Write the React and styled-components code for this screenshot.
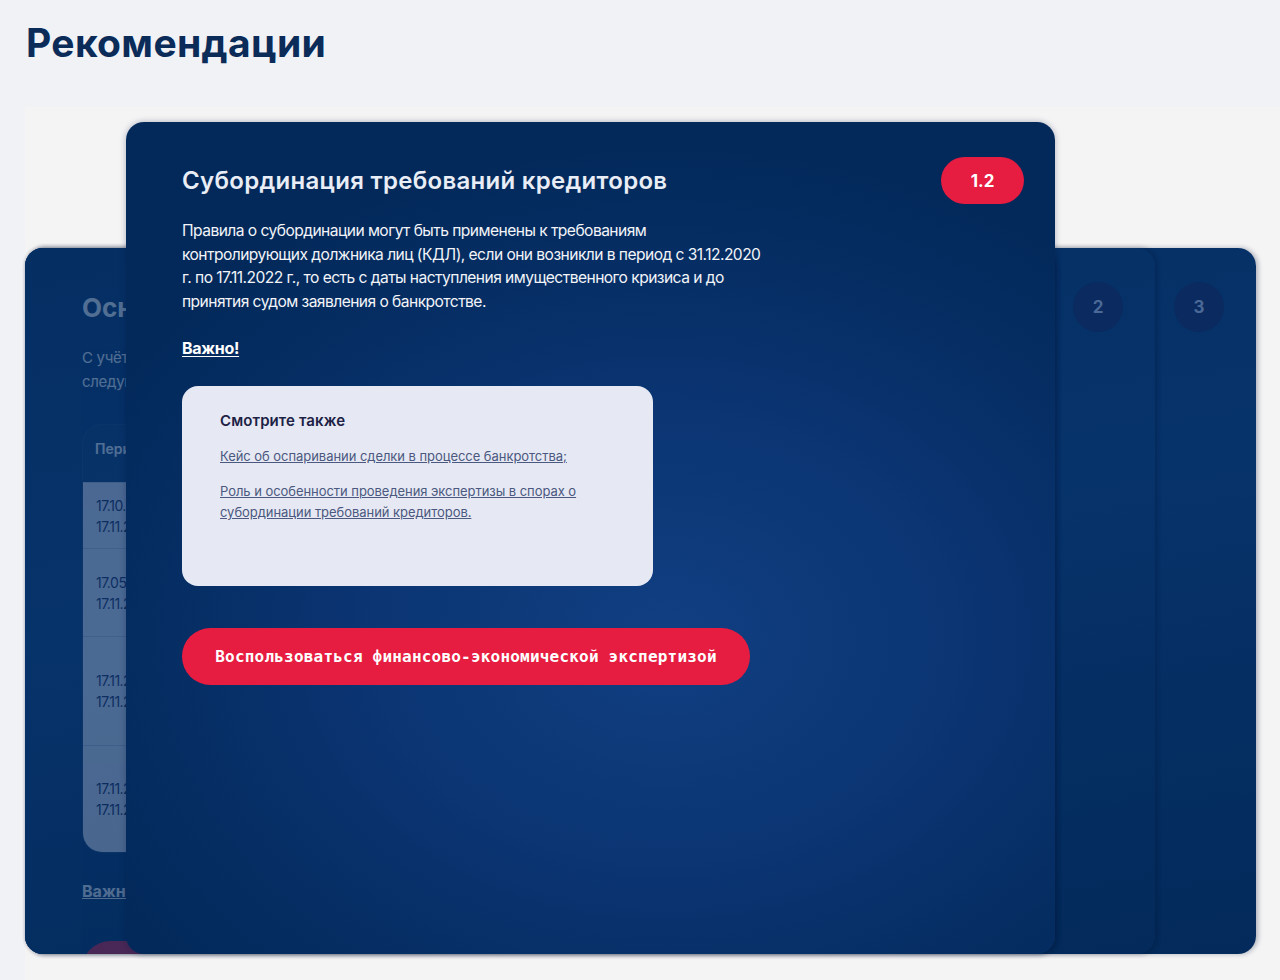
import React from "react";
import styled, { createGlobalStyle } from "styled-components";

const GlobalStyle = createGlobalStyle`
  html, body {
    margin: 0;
    padding: 0;
    background: #f0f2f6;
    font-family: Inter, "Noto Sans", sans-serif;
    -webkit-font-smoothing: antialiased;
  }
  * { box-sizing: border-box; }
`;

const Page = styled.div`
  width: 1280px;
  height: 980px;
  overflow: hidden;
  padding-top: 19px;
`;

const PageTitle = styled.h1`
  margin: 0 0 0 26px;
  font-size: 39px;
  line-height: 48px;
  font-weight: 700;
  color: #0b2c59;
  letter-spacing: 0.35px;
`;

const Section = styled.section`
  margin: 40px 0 0 25px;
  padding: 15px 24px 26px 0;
  background: #f4f4f5;
`;

const Stack = styled.div`
  display: grid;
  grid-template-columns: 1fr;
`;

const BackCard = styled.div`
  grid-area: 1 / 1;
  position: relative;
  z-index: ${(p) => p.$z};
  margin-top: 126px;
  width: ${(p) => p.$width}px;
  height: 706px;
  border-radius: 18px;
  overflow: hidden;
  background: linear-gradient(170deg, #052f63 0%, #07336b 45%, #032a5a 100%);
  box-shadow: 2px 0 5px rgba(0, 16, 48, 0.3);
  display: flex;
  flex-direction: column;
`;

const BackHeader = styled.div`
  display: flex;
  align-items: center;
  justify-content: space-between;
  padding: 34px 32px 0 57px;
  height: 84px;
`;

const NumberCircle = styled.div`
  width: 50px;
  height: 50px;
  border-radius: 50%;
  background: #0a2a60;
  color: #4a6997;
  font-size: 17px;
  font-weight: 700;
  display: flex;
  align-items: center;
  justify-content: center;
`;

const Faded = styled.div`
  opacity: 0.3;
  color: #ffffff;
`;

const BackTitle = styled.h2`
  margin: 0;
  font-size: 26px;
  font-weight: 700;
  color: #fff;
  white-space: nowrap;
`;

const BackBody = styled(Faded)`
  padding: 14px 0 0 57px;
`;

const BackText = styled.p`
  margin: 0;
  font-size: 15px;
  line-height: 24px;
  letter-spacing: -0.3px;
  width: 820px;
`;

const Table = styled.div`
  margin-top: 30px;
  width: 880px;
  border-radius: 20px;
  overflow: hidden;
  border: 1px solid rgba(255, 255, 255, 0.08);
`;

const TableHead = styled.div`
  height: 57px;
  display: flex;
  align-items: center;
  padding: 0 0 10px 12px;
  font-size: 14px;
  font-weight: 600;
  background: rgba(255, 255, 255, 0.03);
`;

const TableRow = styled.div`
  height: ${(p) => p.$h}px;
  display: flex;
  align-items: center;
  padding-left: 13px;
  background: #e6e9f3;
  color: #1c2550;
  font-size: 14px;
  line-height: 21px;
  letter-spacing: -0.5px;
  border-top: 1px solid #c3c9da;
  &:first-of-type { border-top: none; }
`;

const BackLink = styled.a`
  display: inline-block;
  margin-top: 28px;
  font-size: 16px;
  font-weight: 700;
  color: #fff;
  text-decoration: underline;
`;

const BackButton = styled.div`
  margin-top: 40px;
  width: 560px;
  height: 57px;
  border-radius: 29px;
  background: #e61c40;
`;

const FrontCard = styled.article`
  grid-area: 1 / 1;
  position: relative;
  z-index: 10;
  margin-left: 101px;
  width: 929px;
  height: 832px;
  border-radius: 18px;
  padding: 35px 31px 0 56px;
  background:
    radial-gradient(ellipse 70% 60% at 58% 62%, #113f82 0%, #0b3573 45%, #052d62 80%, #03295a 100%);
  box-shadow: 0 0 6px rgba(0, 20, 60, 0.3);
  color: #fff;
`;

const FrontHeader = styled.div`
  display: flex;
  align-items: center;
  justify-content: space-between;
  height: 47px;
`;

const FrontTitle = styled.h2`
  margin: 0;
  font-size: 24px;
  font-weight: 600;
  color: #e9edf5;
  letter-spacing: 0.3px;
`;

const Badge = styled.div`
  width: 83px;
  height: 47px;
  border-radius: 24px;
  background: #e61c40;
  color: #fff;
  font-size: 17px;
  font-weight: 700;
  display: flex;
  align-items: center;
  justify-content: center;
`;

const Paragraph = styled.p`
  margin: 15px 0 0;
  max-width: 582px;
  font-size: 15.6px;
  line-height: 23.7px;
  letter-spacing: -0.55px;
  color: #f2f4f8;
`;

const Important = styled.a`
  display: inline-block;
  margin-top: 22px;
  font-size: 16px;
  line-height: 24px;
  font-weight: 700;
  color: #fff;
  text-decoration: underline;
  text-underline-offset: 2px;
  letter-spacing: -0.3px;
`;

const SeeAlso = styled.div`
  margin-top: 26px;
  width: 471px;
  height: 200px;
  border-radius: 16px;
  background: #e6e9f3;
  padding: 25px 30px 0 38px;
`;

const SeeAlsoTitle = styled.h3`
  margin: 0;
  font-size: 15px;
  line-height: 20px;
  font-weight: 600;
  color: #1c2145;
  letter-spacing: 0.1px;
`;

const SeeAlsoLink = styled.a`
  display: block;
  margin-top: ${(p) => p.$gap}px;
  font-size: 13px;
  line-height: 21px;
  color: #4b587f;
  text-decoration: underline;
  letter-spacing: -0.05px;
  max-width: 400px;
`;

const ActionButton = styled.button`
  margin-top: 42px;
  width: 568px;
  height: 57px;
  padding: 0;
  border: none;
  border-radius: 29px;
  background: #e61c40;
  color: #fff;
  font-family: "DejaVu Sans Mono", monospace;
  font-size: 16px;
  font-weight: 700;
  letter-spacing: 0.2px;
  text-align: center;
  cursor: pointer;
`;

const rows = [
  { h: 66, a: "17.10.2020 –", b: "17.11.2022" },
  { h: 88, a: "17.05.2021 –", b: "17.11.2022" },
  { h: 109, a: "17.11.2021 –", b: "17.11.2022" },
  { h: 107, a: "17.11.2022 –", b: "17.11.2022" },
];

const App = () => {
  return (
    <Page>
      <GlobalStyle />
      <PageTitle>Рекомендации</PageTitle>
      <Section>
        <Stack>
          <BackCard $width={1231} $z={1}>
            <BackHeader>
              <span />
              <NumberCircle>3</NumberCircle>
            </BackHeader>
          </BackCard>
          <BackCard $width={1130} $z={2}>
            <BackHeader>
              <span />
              <NumberCircle>2</NumberCircle>
            </BackHeader>
          </BackCard>
          <BackCard $width={1030} $z={3}>
            <BackHeader>
              <Faded>
                <BackTitle>Основные выводы</BackTitle>
              </Faded>
              <NumberCircle>1</NumberCircle>
            </BackHeader>
            <BackBody>
              <BackText>
                С учётом изменений в законодательстве о банкротстве рекомендуется учитывать
                <br />
                следующие периоды при анализе сделок должника
              </BackText>
              <Table>
                <TableHead>Период</TableHead>
                {rows.map((r) => (
                  <TableRow key={r.a + r.h} $h={r.h}>
                    <div>
                      {r.a}
                      <br />
                      {r.b}
                    </div>
                  </TableRow>
                ))}
              </Table>
              <BackLink>Важно!</BackLink>
              <BackButton />
            </BackBody>
          </BackCard>

          <FrontCard>
            <FrontHeader>
              <FrontTitle>Субординация требований кредиторов</FrontTitle>
              <Badge>1.2</Badge>
            </FrontHeader>
            <Paragraph>
              Правила о субординации могут быть применены к требованиям
              контролирующих должника лиц (КДЛ), если они возникли в период с 31.12.2020
              г. по 17.11.2022 г., то есть с даты наступления имущественного кризиса и до
              принятия судом заявления о банкротстве.
            </Paragraph>
            <Important>Важно!</Important>
            <SeeAlso>
              <SeeAlsoTitle>Смотрите также</SeeAlsoTitle>
              <SeeAlsoLink $gap={15}>
                Кейс об оспаривании сделки в процессе банкротства;
              </SeeAlsoLink>
              <SeeAlsoLink $gap={14}>
                Роль и особенности проведения экспертизы в спорах о субординации
                требований кредиторов.
              </SeeAlsoLink>
            </SeeAlso>
            <ActionButton>Воспользоваться финансово-экономической экспертизой</ActionButton>
          </FrontCard>
        </Stack>
      </Section>
    </Page>
  );
};

export default App;
